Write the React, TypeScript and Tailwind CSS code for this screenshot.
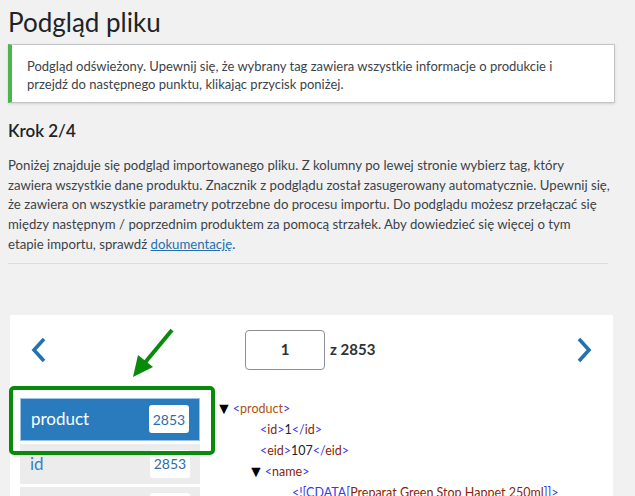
const ft = { fontFamily: '"Segoe UI", Lato, "Noto Sans", sans-serif' }

const Chevron = ({ dir }: { dir: "left" | "right" }) => (
  <svg width="16" height="26" viewBox="0 0 16 26" fill="none">
    <path
      d={dir === "left" ? "M13 2 L3 13 L13 24" : "M3 2 L13 13 L3 24"}
      stroke="#2271b1"
      strokeWidth="3.6"
      strokeLinejoin="miter"
    />
  </svg>
)

const Tag = ({ name, close, tone = "#8a1f0a" }: { name: string; close?: boolean; tone?: string }) => (
  <>
    <span className="text-[#3838f0]">&lt;{close ? "/" : ""}</span>
    <span style={{ color: tone }}>{name}</span>
    <span className="text-[#3838f0]">&gt;</span>
  </>
)

const Toggle = () => (
  <span className="inline-block text-[16px] leading-none text-black mr-[1px] align-[-1px]">▼</span>
)

const ListItem = ({ label, count, active }: { label: string; count: string; active?: boolean }) => (
  <div
    className={
      active
        ? "h-[43px] flex items-center justify-between px-[10px] bg-[#2a7bbd] border border-[#9cc3e6]"
        : "h-[40px] flex items-center justify-between px-[10px] bg-[#ececec]"
    }
  >
    <span className={active ? "text-white text-[17px]" : "text-[#3582c4] text-[17px]"}>{label}</span>
    <span className="bg-white rounded-[3px] w-[40px] h-[28px] flex items-center justify-center text-[14px] text-[#2e6da4]">
      {count}
    </span>
  </div>
)

export default function App() {
  return (
    <div className="w-[635px] h-[496px] overflow-hidden bg-[#f1f1f1] pl-[8px] text-[#3c434a]" style={ft}>
      <h1 className="text-[26px] leading-[32px] pt-[6px] text-[#1d2327] font-normal">Podgląd pliku</h1>

      <div className="mt-[6px] w-[607px] bg-white border border-[#c3c4c7] border-l-4 border-l-[#4ab54a] shadow-sm px-[15px] pt-[12px] pb-[9px] text-[13px] leading-[18px]">
        Podgląd odświeżony. Upewnij się, że wybrany tag zawiera wszystkie informacje o produkcie i
        <br />
        przejdź do następnego punktu, klikając przycisk poniżej.
      </div>

      <h2 className="mt-[17px] text-[17px] font-semibold text-[#1d2327] leading-[22px]">Krok 2/4</h2>

      <p className="mt-[14px] text-[13.2px] leading-[19.7px] w-[600px] whitespace-nowrap">
        Poniżej znajduje się podgląd importowanego pliku. Z kolumny po lewej stronie wybierz tag, który
        <br />
        zawiera wszystkie dane produktu. Znacznik z podglądu został zasugerowany automatycznie. Upewnij się,
        <br />
        że zawiera on wszystkie parametry potrzebne do procesu importu. Do podglądu możesz przełączać się
        <br />
        między następnym / poprzednim produktem za pomocą strzałek. Aby dowiedzieć się więcej o tym
        <br />
        etapie importu, sprawdź{" "}
        <a className="text-[#2271b1] underline">dokumentację</a>.
      </p>

      <hr className="mt-[8px] w-[600px] border-t border-[#dcdcde]" />

      <div className="relative mt-[51px] ml-[2px] w-[603px] h-[260px] bg-white pt-[15px]">
        <div className="flex items-center h-[40px] pl-[21px] pr-[21px]">
          <Chevron dir="left" />
          <div className="ml-[198px] flex items-center gap-[5px]">
            <div className="w-[80px] h-[40px] border border-[#8c8f94] rounded-[4px] flex items-center justify-center font-bold text-[15px] text-[#2c3338]">
              1
            </div>
            <span className="font-bold text-[15px] text-[#2c3338]">z 2853</span>
          </div>
          <div className="ml-auto">
            <Chevron dir="right" />
          </div>
        </div>

        <div className="flex mt-[28px]">
          <div className="ml-[10px] w-[180px] flex flex-col gap-[3px]">
            <ListItem label="product" count="2853" active />
            <ListItem label="id" count="2853" />
            <ListItem label="eid" count="2853" />
          </div>
          <div className="ml-[16px] text-[12.5px] leading-[21px]">
            <div>
              <Toggle />
              <Tag name="product" tone="#b0520a" />
            </div>
            <div className="pl-[44px] text-[#222]">
              <Tag name="id" />1<Tag name="id" close />
            </div>
            <div className="pl-[44px] text-[#222]">
              <Tag name="eid" />107<Tag name="eid" close />
            </div>
            <div className="pl-[32px]">
              <Toggle />
              <Tag name="name" />
            </div>
            <div className="pl-[76px]">
              <span className="text-[#3838f0]">&lt;![CDATA[</span>
              <span className="text-[#8a1f0a]">Preparat Green Stop Happet 250ml</span>
              <span className="text-[#3838f0]">]]&gt;</span>
            </div>
          </div>
        </div>

        <div className="absolute left-[-1px] top-[71px] w-[206px] h-[69px] border-4 border-[#0a8a0a] rounded-[5px]" />
        <svg className="absolute left-[115px] top-[10px]" width="60" height="60" viewBox="0 0 60 60">
          <line x1="47" y1="5" x2="18" y2="40" stroke="#0a8a0a" strokeWidth="4" />
          <polygon points="8,52 13,30 28,42" fill="#0a8a0a" />
        </svg>
      </div>
    </div>
  )
}
